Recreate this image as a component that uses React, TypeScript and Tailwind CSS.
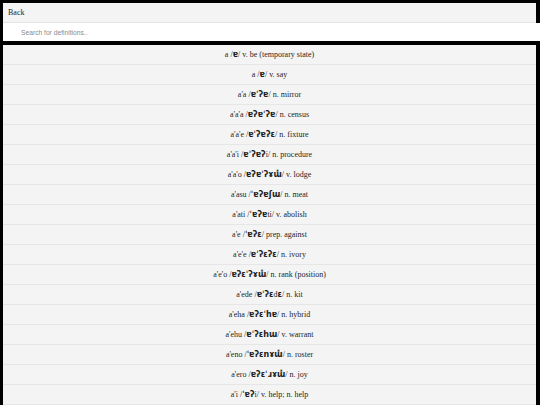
const entries: [string, string, string][] = [
  ["a", "ɐ", "v. be (temporary state)"],
  ["a", "ɐ", "v. say"],
  ["a'a", "ɐˈʔɐ", "n. mirror"],
  ["a'a'a", "ɐʔɐˈʔɐ", "n. census"],
  ["a'a'e", "ɐˈʔɐʔɛ", "n. fixture"],
  ["a'a'i", "ɐˈʔɐʔi", "n. procedure"],
  ["a'a'o", "ɐʔɐˈʔɤɯ̽", "v. lodge"],
  ["a'asu", "ˈɐʔɐʃɯ", "n. meat"],
  ["a'ati", "ˈɐʔɐti", "v. abolish"],
  ["a'e", "ˈɐʔɛ", "prep. against"],
  ["a'e'e", "ɐˈʔɛʔɛ", "n. ivory"],
  ["a'e'o", "ɐʔɛˈʔɤɯ̽", "n. rank (position)"],
  ["a'ede", "ɐˈʔɛdɛ", "n. kit"],
  ["a'eha", "ɐʔɛˈhɐ", "n. hybrid"],
  ["a'ehu", "ɐˈʔɛhɯ", "v. warrant"],
  ["a'eno", "ˈɐʔɛnɤɯ̽", "n. roster"],
  ["a'ero", "ɐʔɛˈɹɤɯ̽", "n. joy"],
  ["a'i", "ˈɐʔi", "v. help; n. help"],
];

const Ipa = ({ text }: { text: string }) => {
  const runs = text.match(/[idt]+|[^idt]+/g) ?? [];
  return (
    <>
      {runs.map((run, i) =>
        /^[idt]+$/.test(run) ? (
          <span key={i}>{run}</span>
        ) : (
          <span key={i} className="font-['DejaVu_Sans',sans-serif] font-bold">
            {run}
          </span>
        )
      )}
    </>
  );
};

export default function App() {
  return (
    <div className="h-[405px] w-[540px] overflow-hidden bg-black font-['Liberation_Serif',serif] text-[#1e1e1e]">
      <div className="ml-[3px] mr-[4px] mt-[3px] flex h-[20px] items-center border-b border-[#e2e2e2] bg-[#f4f4f4] pl-[5px] text-[8px]">
        Back
      </div>
      <input
        className="ml-[3px] block h-[18px] w-[537px] bg-white pl-[18px] font-['Liberation_Sans',sans-serif] text-[6.7px] outline-none placeholder:text-[#8a8a8a]"
        placeholder="Search for definitions.."
      />
      <div className="ml-[3px] mr-[4px] mt-[4px] bg-[#f4f4f4]">
        {entries.map(([word, ipa, def], i) => (
          <div
            key={i}
            className="flex h-[20px] items-center justify-center whitespace-pre border-b border-[#e6e6e6] text-[8px]"
          >
            {word} /<Ipa text={ipa} />/ {def}
          </div>
        ))}
      </div>
    </div>
  );
}
